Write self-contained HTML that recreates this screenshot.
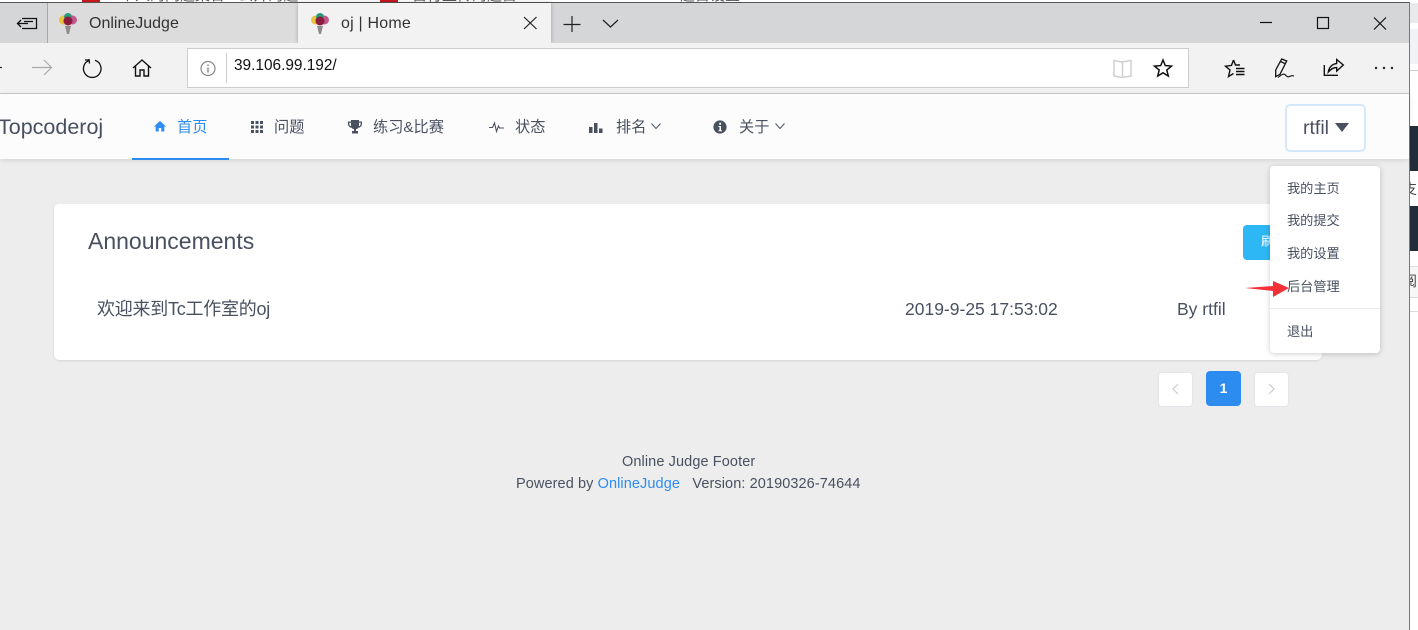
<!DOCTYPE html>
<html lang="zh"><head><meta charset="utf-8"><title>oj | Home</title>
<style>
html,body{margin:0;padding:0;width:1418px;height:630px;overflow:hidden;background:#fff}
body{position:relative;font-family:"Liberation Sans","Noto Sans CJK SC",sans-serif;color:#495060}
.a{position:absolute;white-space:nowrap}
svg{position:absolute;overflow:visible}
.nav{font-size:15.2px;line-height:20px;top:118px;color:#495060}
.dd{font-size:13.2px;line-height:18px;left:1287px;color:#495060}
.pg{position:absolute;top:372px;width:33px;height:33px;background:#fff;border:1px solid #e3e6eb;border-radius:4px}
</style></head><body>
<!-- background window behind -->
<div class="a" style="left:0;top:0;width:1418px;height:3px;background:#fff;overflow:hidden">
<div class="a" style="left:82px;top:-1px;width:18px;height:4px;background:#c8161d"></div>
<div class="a" style="left:380px;top:-1px;width:18px;height:4px;background:#c8161d"></div>
<span class="a" style="left:120px;top:-13px;font-size:15px;line-height:18px;color:#555">个人的问题集合 · 公开的题</span>
<span class="a" style="left:412px;top:-13px;font-size:15px;line-height:18px;color:#555">自行上传的题目</span>
<span class="a" style="left:680px;top:-13px;font-size:15px;line-height:18px;color:#555">题目设置</span>
</div>
<div class="a" style="left:1410px;top:3px;width:8px;height:627px;background:#fff"></div>
<div class="a" style="left:1410px;top:3px;width:8px;height:20px;background:#e8eaec"></div>
<div class="a" style="left:1410px;top:29px;width:8px;height:35px;background:#f0f2f5"></div>
<div class="a" style="left:1410px;top:70px;width:8px;height:1px;background:#ccc"></div>
<div class="a" style="left:1410px;top:126px;width:8px;height:45px;background:#212d3b"></div>
<div class="a" style="left:1410px;top:206px;width:8px;height:45px;background:#212d3b"></div>
<div class="a" style="left:1410px;top:266px;width:8px;height:30px;background:#f7f7f7;border-top:1px solid #ddd;border-bottom:1px solid #ddd"></div>
<div class="a" style="left:1410px;top:311px;width:8px;height:1px;background:#ddd"></div>
<div class="a" style="left:1410px;top:180px;width:8px;height:18px;overflow:hidden"><span class="a" style="left:-7px;top:0;font-size:14px;line-height:18px;color:#444">支</span></div>
<div class="a" style="left:1410px;top:272px;width:8px;height:18px;overflow:hidden"><span class="a" style="left:-7px;top:0;font-size:14px;line-height:18px;color:#444">阅</span></div>

<!-- window -->
<div class="a" style="left:0;top:2px;width:1410px;height:628px;background:#ededed;overflow:hidden;border-top:1px solid #555;border-right:1px solid #777;box-sizing:border-box"></div>
<!-- tab strip -->
<div class="a" style="left:0;top:3px;width:1409px;height:40px;background:#d5d6d8"></div>
<div class="a" style="left:47px;top:3px;width:251px;height:40px;background:#dcdcdc;border-left:1px solid #a8a8a8;box-sizing:border-box"></div>
<div class="a" style="left:298px;top:3px;width:253px;height:40px;background:#f2f2f2;box-shadow:0 0 4px rgba(0,0,0,.25)"></div>
<div class="a" style="left:89px;top:15px;font-size:16px;line-height:18px;color:#333">OnlineJudge</div>
<div class="a" style="left:341px;top:15px;font-size:16px;line-height:18px;color:#333;letter-spacing:.2px">oj | Home</div>
<!-- favicons -->
<svg style="left:59px;top:13px" width="18" height="22" viewBox="0 0 18 22">
<path d="M6 13H12L10 21H8Z" fill="#8d8d8d"/>
<circle cx="4.500" cy="7" r="4.500" fill="#e8c43a"/><circle cx="13.500" cy="7" r="4.500" fill="#c15a8c"/><circle cx="9" cy="4" r="4" fill="#2a9a7d"/><circle cx="9" cy="8" r="4.500" fill="#8d1c3e"/></svg>
<svg style="left:311px;top:13px" width="18" height="22" viewBox="0 0 18 22">
<path d="M6 13H12L10 21H8Z" fill="#8d8d8d"/>
<circle cx="4.500" cy="7" r="4.500" fill="#e8c43a"/><circle cx="13.500" cy="7" r="4.500" fill="#c15a8c"/><circle cx="9" cy="4" r="4" fill="#2a9a7d"/><circle cx="9" cy="8" r="4.500" fill="#8d1c3e"/></svg>

<!-- toolbar -->
<div class="a" style="left:0;top:43px;width:1409px;height:50px;background:#f2f2f2;border-bottom:1px solid #ccc;box-sizing:content-box"></div>
<div class="a" style="left:187px;top:48px;width:1002px;height:40px;background:#fff;border:1px solid #ccc;box-sizing:border-box"></div>
<div class="a" style="left:226px;top:53px;width:1px;height:30px;background:#ccc"></div>
<div class="a" style="left:234px;top:57px;font-size:15.400px;line-height:18px;color:#111">39.106.99.192/</div>
<svg style="left:0;top:0" width="1418" height="630">
<g fill="none" stroke="#222" stroke-width="1.200">
<path d="M22 18.500H36.500V28.500H22M24 21.500H33M17.500 23.500H28M21 20L17.500 23.500L21 27" stroke="#111" stroke-width="1.300"/>
<path d="M524 17L536.500 29M536.500 17L524 29"/>
<path d="M572 16V32M563.500 24.500H580.500"/>
<path d="M603 20L610.500 27L618 20"/>
<path d="M1260 22.500H1272" stroke="#111"/>
<rect x="1317.500" y="17.500" width="11" height="11" stroke="#111"/>
<path d="M1374 17.500L1386 29.500M1386 17.500L1374 29.500" stroke="#111"/>
<path d="M0 67.500H2"/>
<path d="M32 67.500H51M44 60L51.500 67.500L44 75" stroke="#aaa"/>
<path d="M89.500 60.300A8.800 8.800 0 1 0 95 60.300M89 59L89.500 63.500M85 60H89.500" stroke="#111" stroke-width="1.300"/>
<path d="M133 68L142 60L151 68M135.500 66V76H140V70H144V76H148.500V66" stroke="#111" stroke-width="1.400"/>
<circle cx="208" cy="68.500" r="7" stroke="#888"/><path d="M208 67.500V72.500M208 64.500V66" stroke="#777"/>
<path d="M1122 62L1114 60.500V76L1122 77.500L1131 76V60.500ZM1122.500 62V77" stroke="#d0d0d0" stroke-width="1.500"/>
<path d="M1163 60L1165.300 65.600L1171.500 66.100L1166.800 70L1168.300 76L1163 72.800L1157.700 76L1159.200 70L1154.500 66.100L1160.700 65.600Z" stroke="#111" stroke-width="1.500"/>
<path d="M1233.500 60L1235.500 65H1240M1233.500 60L1231.500 65.400L1225.500 66.200L1230 70L1228.500 76.500L1233.500 73.500M1236 68.500H1244.500M1236 71.500H1244.500M1236 74.500H1244.500" stroke="#111" stroke-width="1.400"/>
<path d="M1275.700 70L1281.700 59L1286.700 61L1280 74.300L1275.700 76.700ZM1280.500 61.500L1285.500 63.800" stroke="#111" stroke-width="1.300"/>
<path d="M1278 77.500C1281 75 1283 73.500 1285 74.500C1286 75.500 1287 77 1288.500 76.800C1290 76.500 1291.500 75 1294 76" stroke="#111" stroke-width="1.100"/>
<path d="M1324.300 65V75.300H1338M1328.300 72C1329 67.500 1332 64 1336.700 63.500V59.500L1343.300 65L1336.700 71V67.500C1333 67.500 1330.500 69.500 1328.300 72Z" stroke="#111" stroke-width="1.400"/>
</g>
<circle cx="1376" cy="68" r="1.200" fill="#222"/><circle cx="1384" cy="68" r="1.200" fill="#222"/><circle cx="1392" cy="68" r="1.200" fill="#222"/>
</svg>

<!-- nav -->
<div class="a" style="left:0;top:94px;width:1409px;height:65px;background:#fcfcfc;box-shadow:0 1px 5px rgba(0,0,0,.12)"></div>
<div class="a" style="left:-2px;top:114px;font-size:21.500px;line-height:26px;color:#495060">Topcoderoj</div>
<div class="a" style="left:132px;top:158px;width:97px;height:2px;background:#2d8cf0"></div>
<svg style="left:154px;top:120px" width="12" height="12" viewBox="0 0 12 12"><path d="M6 1L12 6.500H10.300V11.500H7.300V8H4.700V11.500H1.700V6.500H0Z" fill="#2d8cf0"/></svg>
<div class="a nav" style="left:177px;color:#2d8cf0">首页</div>
<svg style="left:251px;top:121px" width="12" height="12" viewBox="0 0 12 12" fill="#495060"><rect width="3" height="3"/><rect x="4.500" width="3" height="3"/><rect x="9" width="3" height="3"/><rect y="4.500" width="3" height="3"/><rect x="4.500" y="4.500" width="3" height="3"/><rect x="9" y="4.500" width="3" height="3"/><rect y="9" width="3" height="3"/><rect x="4.500" y="9" width="3" height="3"/><rect x="9" y="9" width="3" height="3"/></svg>
<div class="a nav" style="left:274px">问题</div>
<svg style="left:348px;top:120px" width="14" height="14" viewBox="0 0 14 14"><path d="M3 0H11V1.500H14V4C14 6 12.500 7.500 10.500 7.700C9.800 8.500 9 9 8 9.200V11H10V13.500H4V11H6V9.200C5 9 4.200 8.500 3.500 7.700C1.500 7.500 0 6 0 4V1.500H3ZM1.300 2.800V4C1.300 5 2 6 3 6.300V2.800ZM11 2.800V6.300C12 6 12.700 5 12.700 4V2.800Z" fill="#495060"/></svg>
<div class="a nav" style="left:373px">练习&amp;比赛</div>
<svg style="left:489px;top:120px" width="15" height="14" viewBox="0 0 15 14"><path d="M0 7.500H3.500L5.500 3L7.500 11.500L9.500 6L10.500 8H15" fill="none" stroke="#495060" stroke-width="1.100"/></svg>
<div class="a nav" style="left:515px">状态</div>
<svg style="left:589px;top:122px" width="14" height="11" viewBox="0 0 14 11" fill="#495060"><rect y="5" width="3.500" height="6"/><rect x="5" y="1" width="3.500" height="10"/><rect x="10" y="6.500" width="3.500" height="4.500"/></svg>
<div class="a nav" style="left:616px">排名</div>
<svg style="left:651px;top:123px" width="10" height="7" viewBox="0 0 10 7"><path d="M.5 .5L5 5.500L9.500 .5" fill="none" stroke="#495060" stroke-width="1"/></svg>
<svg style="left:713px;top:120px" width="14" height="14" viewBox="0 0 14 14"><circle cx="7" cy="7" r="6.600" fill="#495060"/><path d="M5.500 6H8V10.200H9V11.200H5.500V10.200H6.500V7H5.500ZM6.300 2.800H8V4.800H6.300Z" fill="#fff"/></svg>
<div class="a nav" style="left:739px">关于</div>
<svg style="left:775px;top:123px" width="10" height="7" viewBox="0 0 10 7"><path d="M.5 .5L5 5.500L9.500 .5" fill="none" stroke="#495060" stroke-width="1"/></svg>

<div class="a" style="left:1285px;top:104px;width:81px;height:48px;box-sizing:border-box;border:2px solid #d5e8fb;border-radius:5px;background:#fff"></div>
<div class="a" style="left:1303px;top:116px;font-size:19.500px;line-height:24px;color:#495060">rtfil</div>
<svg style="left:1335px;top:123px" width="14" height="9" viewBox="0 0 14 9"><path d="M0 0H14L7 9Z" fill="#495060"/></svg>

<!-- card -->
<div class="a" style="left:54px;top:204px;width:1268px;height:156px;background:#fff;border-radius:5px;box-shadow:0 1px 2px rgba(0,0,0,.1)"></div>
<div class="a" style="left:88px;top:227px;font-size:23px;line-height:28px;color:#495060">Announcements</div>
<div class="a" style="left:97px;top:297px;font-size:18px;line-height:24px;color:#495060;letter-spacing:-.25px">欢迎来到Tc工作室的oj</div>
<div class="a" style="left:905px;top:299px;font-size:17.500px;line-height:20px;color:#495060">2019-9-25 17:53:02</div>
<div class="a" style="left:1177px;top:299px;font-size:17.500px;line-height:20px;color:#495060">By rtfil</div>
<div class="a" style="left:1243px;top:225px;width:60px;height:35px;background:#2db7f5;border-radius:4px"></div>
<div class="a" style="left:1261px;top:233px;font-size:13px;line-height:18px;color:#fff">刷新</div>

<!-- pagination -->
<div class="pg" style="left:1158px"></div>
<svg style="left:1171px;top:383px" width="8" height="12" viewBox="0 0 8 12"><path d="M7 1L2 6L7 11" fill="none" stroke="#ccc" stroke-width="1.200"/></svg>
<div class="a" style="left:1206px;top:371px;width:35px;height:35px;background:#2d8cf0;border-radius:4px;color:#fff;font-size:14px;font-weight:700;line-height:35px;text-align:center">1</div>
<div class="pg" style="left:1254px"></div>
<svg style="left:1268px;top:383px" width="8" height="12" viewBox="0 0 8 12"><path d="M1 1L6 6L1 11" fill="none" stroke="#ccc" stroke-width="1.200"/></svg>

<!-- footer -->
<div class="a" style="left:622px;top:453px;font-size:14.500px;line-height:18px;color:#495060;letter-spacing:.1px">Online Judge Footer</div>
<div class="a" style="left:516px;top:475px;font-size:14.500px;line-height:18px;color:#495060;letter-spacing:.09px">Powered by <span style="color:#2d8cf0">OnlineJudge</span> &nbsp; Version: 20190326-74644</div>

<!-- dropdown -->
<div class="a" style="left:1270px;top:166px;width:110px;height:187px;background:#fff;border-radius:4px;box-shadow:0 1px 6px rgba(0,0,0,.2)"></div>
<div class="a dd" style="top:180px">我的主页</div>
<div class="a dd" style="top:212px">我的提交</div>
<div class="a dd" style="top:245px">我的设置</div>
<div class="a dd" style="top:278px">后台管理</div>
<div class="a" style="left:1270px;top:308px;width:110px;height:1px;background:#e9eaec"></div>
<div class="a dd" style="top:323px">退出</div>
<!-- red arrow -->
<svg style="left:1245px;top:280px" width="44" height="18" viewBox="0 0 44 18"><path d="M0 8L28 6L28 1L44 8L28 17L28 11Z" fill="#f53038"/></svg>
</body></html>
